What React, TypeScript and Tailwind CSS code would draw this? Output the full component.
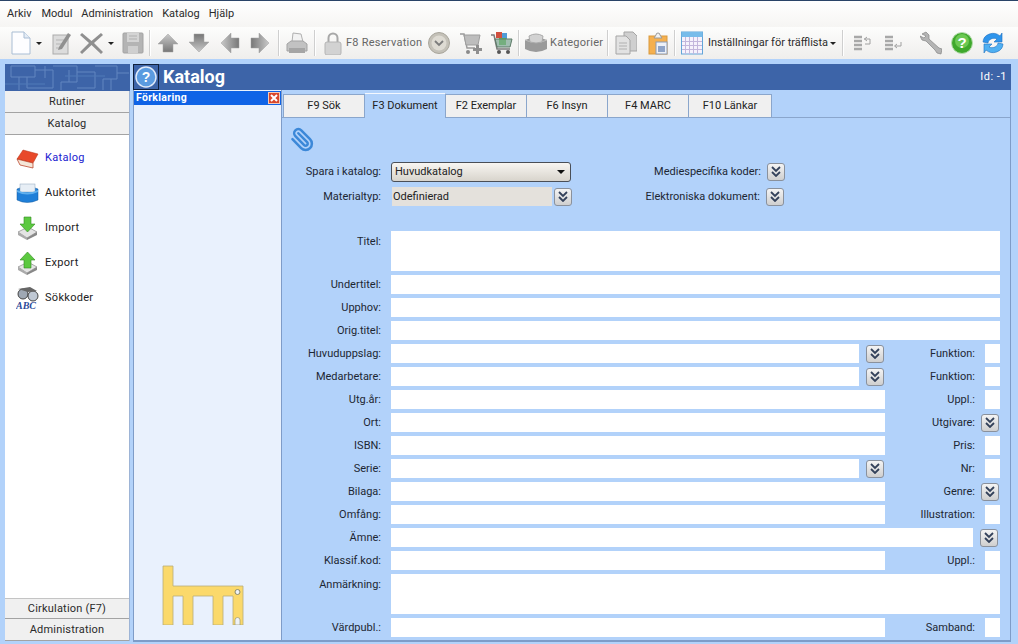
import { Paperclip } from 'lucide-react';
import type { ReactNode } from 'react';

const font = { fontFamily: 'Roboto, "Noto Sans", sans-serif' };

function Sep({ ml }: { ml: number }) {
  return <div className="w-[2px] h-[26px] bg-[#cfcfcf] border-r border-white shrink-0" style={{ marginLeft: ml }} />;
}

function Caret({ ml }: { ml: number }) {
  return <div className="w-0 h-0 border-x-[3px] border-x-transparent border-t-[3px] border-t-[#222] shrink-0" style={{ marginLeft: ml }} />;
}

function Ico({ w, ml, children }: { w: number; ml: number; children: ReactNode }) {
  return (
    <svg width={w} height={24} viewBox={`0 0 ${w} 24`} className="shrink-0" style={{ marginLeft: ml }}>
      {children}
    </svg>
  );
}

function Arrow({ ml, rotate }: { ml: number; rotate: number }) {
  return (
    <Ico w={20} ml={ml}>
      <defs>
        <linearGradient id={`ag${rotate}`} x1="0" y1="0" x2="0" y2="1">
          <stop offset="0" stopColor="#c9c9c9" />
          <stop offset="1" stopColor="#777" />
        </linearGradient>
      </defs>
      <path transform={`rotate(${rotate} 10 12)`} d="M10 3 L20 13 L15 13 L15 21 L5 21 L5 13 L0 13 Z" fill={`url(#ag${rotate})`} stroke="#a0a0a0" strokeWidth="0.500" />
    </Ico>
  );
}

function Toolbar() {
  return (
    <div className="h-[32px] shrink-0 flex items-center bg-gradient-to-b from-[#fdfdfc] to-[#efeeec] pl-[11px] text-[11px] text-[#666]">
      <Ico w={20} ml={0}>
        <path d="M1 1 H13 L19 7 V23 H1 Z" fill="#fdfdff" stroke="#a9bdd4" />
        <path d="M13 1 V7 H19" fill="#e4ecf5" stroke="#a9bdd4" />
      </Ico>
      <Caret ml={5} />
      <Ico w={19} ml={10}>
        <rect x="1" y="4" width="15" height="19" fill="#dcdcdc" stroke="#ababab" />
        <path d="M4 9 H12 M4 13 H10 M4 17 H9" stroke="#b5b5b5" />
        <path d="M7 16 L16 2 L19 4 L10 18 L6 19 Z" fill="#909090" />
      </Ico>
      <Ico w={23} ml={9}>
        <path d="M2 2 L11.500 10 L21 2 L23 4 L14 12 L23 21 L21 23 L11.500 14 L2 23 L0 21 L9 12 L0 4 Z" fill="#8f8f8f" />
      </Ico>
      <Caret ml={5} />
      <Ico w={22} ml={8}>
        <rect x="1" y="2" width="20" height="20" rx="1" fill="#b4b4b4" stroke="#a3a3a3" />
        <rect x="5" y="2" width="12" height="9" fill="#d4d4d4" />
        <path d="M7 5 H15 M7 8 H15" stroke="#b0b0b0" />
        <rect x="6" y="15" width="10" height="7" fill="#cfcfcf" />
      </Ico>
      <Sep ml={5} />
      <Arrow ml={7} rotate={0} />
      <Arrow ml={11} rotate={180} />
      <Arrow ml={11} rotate={270} />
      <Arrow ml={10} rotate={90} />
      <Sep ml={8} />
      <Ico w={22} ml={6}>
        <path d="M7 2 L15 3 L17 11 H6 Z" fill="#f2f2f2" stroke="#b0b0b0" />
        <path d="M1 13 L5 10 H17 L21 13 V20 H1 Z" fill="#c2c2c2" stroke="#a3a3a3" />
        <rect x="3" y="17" width="16" height="5" fill="#a5a5a5" />
      </Ico>
      <Sep ml={6} />
      <Ico w={18} ml={8}>
        <path d="M4.500 12 V7 a4.500 4.500 0 0 1 9 0 V12" fill="none" stroke="#a8a8a8" strokeWidth="2" />
        <rect x="1" y="11" width="16" height="13" rx="2" fill="#d2d2d2" stroke="#b4b4b4" />
      </Ico>
      <span className="ml-[4px] w-[74px] tracking-[0.25px] whitespace-nowrap">F8 Reservation</span>
      <Ico w={22} ml={8}>
        <circle cx="11" cy="12" r="10.500" fill="#c4c1b8" stroke="#a9a69c" />
        <circle cx="11" cy="12" r="7.500" fill="#dedbd3" />
        <path d="M7 10 L11 14 L15 10" fill="none" stroke="#7c7c7c" strokeWidth="1.800" />
      </Ico>
      <Ico w={23} ml={9}>
        <path d="M1 3 H5 L8 17 H16" fill="none" stroke="#9b9b9b" strokeWidth="1.500" />
        <path d="M5 4 H21 L19 14 H7 Z" fill="#bdbdbd" stroke="#9d9d9d" />
        <circle cx="9" cy="21" r="2" fill="#8a8a8a" />
        <rect x="14" y="17" width="9" height="3" fill="#8f8f8f" />
        <rect x="17" y="14" width="3" height="9" fill="#8f8f8f" />
      </Ico>
      <Ico w={23} ml={8}>
        <path d="M1 4 H4 L7 18 H20" fill="none" stroke="#7b7b7b" strokeWidth="1.500" />
        <rect x="6" y="1" width="6" height="6" fill="#d0503f" />
        <rect x="12" y="2" width="5" height="6" fill="#4f9bd6" />
        <rect x="9" y="7" width="7" height="7" fill="#5fbf4a" />
        <path d="M5 8 H22 L20 16 H7 Z" fill="#7ea694" fillOpacity="0.700" stroke="#5d7a68" />
        <circle cx="9" cy="21" r="2" fill="#555" />
        <circle cx="18" cy="21" r="2" fill="#555" />
      </Ico>
      <Sep ml={5} />
      <Ico w={22} ml={5}>
        <path d="M0 9 Q11 4 22 9 V18 Q11 24 0 18 Z" fill="#9a9a9a" />
        <path d="M0 9 Q11 14 22 9" fill="none" stroke="#bdbdbd" />
        <path d="M4 5 Q11 1 18 5 L17 11 Q11 13 5 11 Z" fill="#d2d2d2" stroke="#aaa" />
      </Ico>
      <span className="ml-[3px] w-[53px] tracking-[0.25px] whitespace-nowrap">Kategorier</span>
      <Sep ml={4} />
      <Ico w={22} ml={6}>
        <path d="M9 1 H18 L22 5 V20 H9 Z" fill="#cfcfcf" stroke="#a5a5a5" />
        <path d="M1 5 H11 L15 9 V23 H1 Z" fill="#e2e2e2" stroke="#a5a5a5" />
        <path d="M4 12 H12 M4 15 H12 M4 18 H12" stroke="#b0b0b0" />
      </Ico>
      <Ico w={20} ml={11}>
        <rect x="1" y="5" width="18" height="18" fill="#f5b04f" stroke="#d99a3e" />
        <path d="M6 7 L8 4 A2 2 0 0 1 12 4 L14 7 Z" fill="#f2f2f2" stroke="#999" />
        <rect x="8" y="11" width="11" height="12" fill="#eef1f7" stroke="#8c9cb5" />
        <rect x="10" y="15" width="7" height="6" fill="#8fa4c8" />
      </Ico>
      <Sep ml={6} />
      <Ico w={22} ml={5}>
        <rect x="0.500" y="1" width="21" height="22" fill="#f6f2fc" stroke="#63a5d8" />
        <rect x="0.500" y="1" width="21" height="5" fill="#78bcea" />
        <path d="M4.500 6 V23 M8.500 6 V23 M12.500 6 V23 M16.500 6 V23 M1 10.500 H21 M1 14.500 H21 M1 18.500 H21" stroke="#c3b6dc" />
      </Ico>
      <span className="ml-[5px] w-[121px] text-[#2c2c2c] whitespace-nowrap">Inställningar för träfflista</span>
      <Caret ml={1} />
      <Sep ml={6} />
      <Ico w={18} ml={9}>
        <path d="M1 6 H9 M1 10 H9 M1 14 H9 M1 18 H9" stroke="#a8a8a8" strokeWidth="2.500" />
        <path d="M11 8 H17 V13 H12 M14 6 L11.500 8 L14 10" fill="none" stroke="#a0a0a0" />
      </Ico>
      <Ico w={18} ml={13}>
        <path d="M1 6 H9 M1 10 H9 M1 14 H9 M1 18 H9" stroke="#a8a8a8" strokeWidth="2.500" />
        <path d="M17 11 V15 H11 M13 13 L10.500 15 L13 17" fill="none" stroke="#a0a0a0" />
      </Ico>
      <Ico w={22} ml={18}>
        <path d="M2 3 L6 1 L9 4 L9 8 L19 17 L22 18 L21 23 L17 22 L15 19 L6 10 L2 9 L0 5 L4 7 L6 5 Z" fill="#b4b4b4" stroke="#858585" strokeWidth="0.700" />
      </Ico>
      <svg width={22} height={22} viewBox="0 0 22 22" className="shrink-0 ml-[9px]">
        <circle cx="11" cy="11" r="10.500" fill="#3fa82c" stroke="#b6dcae" />
        <circle cx="11" cy="9" r="7" fill="#6cc852" />
        <text x="11" y="16" textAnchor="middle" fontSize="15" fontWeight="700" fill="#fff" fontFamily="Liberation Sans">?</text>
      </svg>
      <Ico w={22} ml={9}>
        <path d="M1 11 A10 9 0 0 1 18 5 L20 2 V11 H12 L15 8 A6 5 0 0 0 6 12 Z" fill="#2f95ec" stroke="#1d6fc0" strokeWidth="0.600" />
        <path d="M21 13 A10 9 0 0 1 4 19 L2 22 V13 H10 L7 16 A6 5 0 0 0 16 12 Z" fill="#4fb0f2" stroke="#1d6fc0" strokeWidth="0.600" />
      </Ico>
    </div>
  );
}

function NavButton({ label, h }: { label: string; h: number }) {
  return (
    <div className="bg-[#f0f0f0] border-b border-[#a3a3a3] flex items-center justify-center pt-px text-[11px] text-[#2a2a2a] tracking-[0.2px]" style={{ height: h }}>
      {label}
    </div>
  );
}

function NavItem({ label, active, children }: { label: string; active?: boolean; children: ReactNode }) {
  return (
    <div className="h-[35px] flex items-center pl-[11px] gap-[6px]">
      <svg width={23} height={24} viewBox="0 0 23 24" className="shrink-0">{children}</svg>
      <span className={`pt-[2px] text-[11px] tracking-[0.3px] ${active ? 'text-[#1a1ad0]' : 'text-[#222]'}`}>{label}</span>
    </div>
  );
}

function Sidebar() {
  return (
    <div className="w-[125px] flex flex-col shrink-0 mb-px">
      <svg width={125} height={27} viewBox="0 0 125 27" className="block bg-[#3d64a8] shrink-0">
        <g fill="none" stroke="#6386c0" strokeWidth="1">
          <path d="M6 2 H30 V13 H6 Z M14 13 V26 M30 6 H48 V24 H22 V13 M48 2 H72 V18 H56 V26 M72 8 H90 V24 H72 M90 2 H112 V15 H98 V26 M112 9 H124 M40 2 V14 M64 6 V18 M106 15 V26" />
        </g>
        <path d="M0 20 H40 M60 12 H100" stroke="#517ab8" />
      </svg>
      <div className="flex-1 min-h-0 bg-white flex flex-col border-r border-[#9db4d6]">
        <NavButton label="Rutiner" h={22} />
        <NavButton label="Katalog" h={22} />
        <div className="flex-1 pt-[5px]">
          <NavItem label="Katalog" active>
            <path d="M1 13 L7 4 L22 8 L17 17 Z" fill="#e8492a" stroke="#b53115" strokeWidth="0.500" />
            <path d="M1 13 L4 19 L17 22 L17 17 Z" fill="#f4e6d8" stroke="#b53115" strokeWidth="0.700" />
          </NavItem>
          <NavItem label="Auktoritet">
            <path d="M1 8 Q11 3 22 8 V19 Q11 24 1 19 Z" fill="#1f7fd8" stroke="#155a9e" strokeWidth="0.500" />
            <rect x="4" y="3" width="15" height="8" fill="#e7eef5" stroke="#8da5bd" strokeWidth="0.500" />
            <path d="M1 9 Q11 14 22 9 V11 Q11 16 1 11 Z" fill="#60b0ee" />
          </NavItem>
          <NavItem label="Import">
            <path d="M2 16 L12 11 L21 16 L11 22 Z" fill="#e4e4e4" stroke="#777" strokeWidth="0.600" />
            <path d="M2 16 V19 L11 24 V22 Z" fill="#aaa" />
            <path d="M11 22 V24 L21 19 V16 Z" fill="#888" />
            <path d="M8 1 H15 V8 H19 L11.500 16 L4 8 H8 Z" fill="#5cc940" stroke="#338a22" strokeWidth="0.600" />
          </NavItem>
          <NavItem label="Export">
            <path d="M2 16 L12 11 L21 16 L11 22 Z" fill="#e4e4e4" stroke="#777" strokeWidth="0.600" />
            <path d="M2 16 V19 L11 24 V22 Z" fill="#aaa" />
            <path d="M11 22 V24 L21 19 V16 Z" fill="#888" />
            <path d="M8 17 H15 V9 H19 L11.500 1 L4 9 H8 Z" fill="#5cc940" stroke="#338a22" strokeWidth="0.600" />
          </NavItem>
          <NavItem label="Sökkoder">
            <circle cx="7" cy="8" r="5" fill="#9fa8b4" stroke="#444" />
            <circle cx="17" cy="10" r="5" fill="#bfc8d4" stroke="#444" />
            <path d="M2 3 L14 1 L21 5 L12 6 Z" fill="#666" />
            <text x="0" y="23" fontSize="10" fontStyle="italic" fontWeight="700" fill="#2b4a9a" fontFamily="Liberation Serif">ABC</text>
          </NavItem>
        </div>
        <div className="border-t border-[#c4c4c4]"><NavButton label="Cirkulation (F7)" h={20} /></div>
        <NavButton label="Administration" h={22} />
      </div>
    </div>
  );
}

function Explain() {
  return (
    <div className="w-[148px] shrink-0 flex flex-col bg-[#e9f1fd] border-l border-[#7e9cc8] border-b-2 border-b-[#7e9cc8]">
      <div className="h-[14px] mt-px bg-[#0f63e6] flex items-center justify-between pr-px">
        <span className="pl-[2px] text-[10.5px] font-bold text-white tracking-[0.3px]">Förklaring</span>
        <div className="w-[12px] h-[12px] bg-[#d9472b] border border-[#f4c9b8] flex items-center justify-center">
          <svg width={8} height={8} viewBox="0 0 8 8"><path d="M1 1 L7 7 M7 1 L1 7" stroke="#fff" strokeWidth="2" /></svg>
        </div>
      </div>
      <div className="flex-1 flex items-end pb-[15px] pl-[28px]">
        <svg width={82} height={60} viewBox="0 0 82 60">
          <path d="M1 1 H11 V21 H81 V60 H71 V31 H61 V60 H51 V31 H31 V60 H21 V31 H11 V60 H1 Z" fill="#fbd96b" stroke="#b9ad7a" strokeWidth="0.800" />
          <circle cx="75.500" cy="27" r="2.500" fill="#eef2f8" stroke="#8b8b6a" />
          <path d="M73 60 V55 a2.500 2.500 0 0 1 5 0 V60 Z" fill="#eef2f8" stroke="#8b8b6a" strokeWidth="0.600" />
        </svg>
      </div>
    </div>
  );
}

function Tabs() {
  const tabs = [['F9 Sök', 82], ['F3 Dokument', 81], ['F2 Exemplar', 81], ['F6 Insyn', 81], ['F4 MARC', 81], ['F10 Länkar', 83]] as const;
  return (
    <div className="h-[28px] shrink-0 pl-px flex items-end border-b border-[#8aa6cc]">
      {tabs.map(([t, w]) => {
        const active = t === 'F3 Dokument';
        return (
          <div
            key={t}
            style={{ width: w }}
            className={`flex items-center justify-center pt-px text-[11px] text-[#222] border-r border-l-0 border-[#8aa6cc] first:border-l ${active ? 'h-[25px] -mb-px bg-[#b2d2fa] border-t border-t-[#f4f8fe]' : 'h-[23px] bg-[#f0f0f0] border-t'}`}
          >
            {t}
          </div>
        );
      })}
    </div>
  );
}

function DownBtn() {
  return (
    <div className="w-[18px] h-[18px] shrink-0 rounded-[3px] border border-[#8a919c] bg-gradient-to-b from-[#f4f4f4] to-[#cfcfcf] flex items-center justify-center">
      <svg width={10} height={11} viewBox="0 0 10 11">
        <path d="M1 1 L5 5 L9 1 M1 6 L5 10 L9 6" fill="none" stroke="#33415a" strokeWidth="1.800" />
      </svg>
    </div>
  );
}

function Label({ children, w }: { children: string; w: number }) {
  return <div className="pt-px text-right text-[11px] text-[#1d2733] whitespace-nowrap shrink-0" style={{ width: w }}>{children}</div>;
}

type Row = { label: string; kind: 'full' | 'btn' | 'plain' | 'long'; right?: string; rightBtn?: boolean; h?: number };

const rows: Row[] = [
  { label: 'Titel:', kind: 'full', h: 40 },
  { label: 'Undertitel:', kind: 'full' },
  { label: 'Upphov:', kind: 'full' },
  { label: 'Orig.titel:', kind: 'full' },
  { label: 'Huvuduppslag:', kind: 'btn', right: 'Funktion:' },
  { label: 'Medarbetare:', kind: 'btn', right: 'Funktion:' },
  { label: 'Utg.år:', kind: 'plain', right: 'Uppl.:' },
  { label: 'Ort:', kind: 'plain', right: 'Utgivare:', rightBtn: true },
  { label: 'ISBN:', kind: 'plain', right: 'Pris:' },
  { label: 'Serie:', kind: 'btn', right: 'Nr:' },
  { label: 'Bilaga:', kind: 'plain', right: 'Genre:', rightBtn: true },
  { label: 'Omfång:', kind: 'plain', right: 'Illustration:' },
  { label: 'Ämne:', kind: 'long' },
  { label: 'Klassif.kod:', kind: 'plain', right: 'Uppl.:' },
  { label: 'Anmärkning:', kind: 'full', h: 40 },
  { label: 'Värdpubl.:', kind: 'plain', right: 'Samband:' },
];

function FormRow({ row }: { row: Row }) {
  const h = row.h ?? 19;
  return (
    <div className={`flex ${row.h ? 'items-start' : 'items-center'}`} style={{ height: h }}>
      <div className={`mr-[10px] ${row.h ? 'pt-[2px]' : ''}`}><Label w={99}>{row.label}</Label></div>
      {row.kind === 'full' && <div className="flex-1 h-full bg-white" />}
      {row.kind === 'plain' && <div className="w-[494px] h-full bg-white shrink-0" />}
      {row.kind === 'btn' && (
        <div className="w-[494px] shrink-0 h-full flex items-center gap-[7px]">
          <div className="w-[468px] h-full bg-white" />
          <DownBtn />
        </div>
      )}
      {row.kind === 'long' && (
        <div className="flex-1 h-full flex items-center gap-[7px] pr-[2px]">
          <div className="flex-1 h-full bg-white" />
          <DownBtn />
        </div>
      )}
      {row.right && (
        <div className="flex-1 flex items-center justify-end h-full">
          <Label w={79}>{row.right}</Label>
          {row.rightBtn ? (
            <div className="ml-[6px] mr-px"><DownBtn /></div>
          ) : (
            <div className="ml-[10px] w-[15px] h-full bg-white" />
          )}
        </div>
      )}
    </div>
  );
}

function Form() {
  return (
    <div className="flex-1 flex flex-col border-l border-[#7e9cc8] border-r border-r-[#7e9cc8] border-b-2 border-b-[#7e9cc8] bg-[#b2d2fa] min-w-0">
      <Tabs />
      <div className="pl-[8px] pt-[9px]">
        <Paperclip size={25} className="text-[#3c88d8] -scale-x-100" strokeWidth={2.4} />
      </div>
      <div className="pr-[10px] flex flex-col">
        <div className="flex mt-[10px] items-center h-[19px]">
          <Label w={99}>Spara i katalog:</Label>
          <div className="ml-[10px] w-[180px] h-[20px] rounded-[3px] border border-[#4a4f57] bg-gradient-to-b from-[#f8f6f2] to-[#d8d4cc] flex items-center justify-between pt-px pl-[3px] pr-[5px] text-[11px] text-[#222]">
            Huvudkatalog
            <div className="w-0 h-0 border-x-[4px] border-x-transparent border-t-[4px] border-t-[#111]" />
          </div>
          <Label w={190}>Mediespecifika koder:</Label>
          <div className="ml-[6px]"><DownBtn /></div>
        </div>
        <div className="flex mt-[6px] items-center h-[19px]">
          <Label w={99}>Materialtyp:</Label>
          <div className="ml-[11px] w-[160px] h-[19px] bg-[#e4e1dc] flex items-center pt-px pl-px text-[11px] text-[#222]">Odefinierad</div>
          <div className="ml-[2px]"><DownBtn /></div>
          <Label w={188}>Elektroniska dokument:</Label>
          <div className="ml-[6px]"><DownBtn /></div>
        </div>
        <div className="flex flex-col gap-[4px] mt-[25px]">
          {rows.map((r, i) => (
            <FormRow key={i} row={r} />
          ))}
        </div>
      </div>
    </div>
  );
}

export default function App() {
  return (
    <div className="w-[1018px] h-[644px] overflow-hidden flex flex-col bg-[#b2d2fa] border-t border-[#2a4468]" style={font}>
      <div className="h-[26px] shrink-0 bg-gradient-to-b from-white to-[#f6f5f3] flex items-center pl-[7px] gap-[9px] text-[11px] text-[#2a2a2a]">
        <span>Arkiv</span>
        <span className="ml-px">Modul</span>
        <span>Administration</span>
        <span>Katalog</span>
        <span>Hjälp</span>
      </div>
      <Toolbar />
      <div className="flex-1 min-h-0 flex pl-[5px] pr-[7px] pt-[5px] pb-[2px] gap-[3px]">
        <Sidebar />
        <div className="flex-1 flex flex-col min-w-0">
          <div className="h-[26px] shrink-0 bg-[#3d64a8] flex items-center justify-between pr-[4px] text-white">
            <div className="flex items-center gap-[4px]">
              <div className="w-[26px] h-[26px] border border-[#10203c] flex items-center justify-center">
                <svg width={22} height={22} viewBox="0 0 22 22">
                  <circle cx="11" cy="11" r="10" fill="#5b9be0" stroke="#dfeafa" strokeWidth="1.500" />
                  <text x="11" y="16" textAnchor="middle" fontSize="14" fontWeight="700" fill="#fff" fontFamily="Liberation Sans">?</text>
                </svg>
              </div>
              <span className="text-[18px] font-bold leading-none">Katalog</span>
            </div>
            <span className="text-[11px] tracking-[0.5px]">Id: -1</span>
          </div>
          <div className="flex-1 min-h-0 flex">
            <Explain />
            <Form />
          </div>
        </div>
      </div>
    </div>
  );
}
